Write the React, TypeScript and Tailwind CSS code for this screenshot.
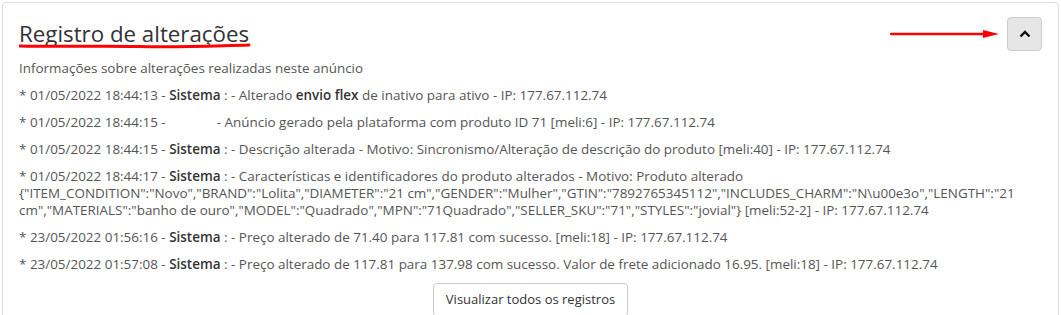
import React from "react";

const B = ({ children }: { children: React.ReactNode }) => <b className="font-semibold text-[#333]">{children}</b>;

const entries: React.ReactNode[] = [
  <>* 01/05/2022 18:44:13 - <B>Sistema</B> : - Alterado <B>envio flex</B> de inativo para ativo - IP: 177.67.112.74</>,
  <>* 01/05/2022 18:44:15 - <span className="inline-block w-[44px]"></span> - Anúncio gerado pela plataforma com produto ID 71 [meli:6] - IP: 177.67.112.74</>,
  <>* 01/05/2022 18:44:15 - <B>Sistema</B> : - Descrição alterada - Motivo: Sincronismo/Alteração de descrição do produto [meli:40] - IP: 177.67.112.74</>,
  <>* 01/05/2022 18:44:17 - <B>Sistema</B> : - Características e identificadores do produto alterados - Motivo: Produto alterado {'{"ITEM_CONDITION":"Novo","BRAND":"Lolita","DIAMETER":"21 cm","GENDER":"Mulher","GTIN":"7892765345112","INCLUDES_CHARM":"N\\u00e3o","LENGTH":"21 cm","MATERIALS":"banho de ouro","MODEL":"Quadrado","MPN":"71Quadrado","SELLER_SKU":"71","STYLES":"jovial"}'} [meli:52-2] - IP: 177.67.112.74</>,
  <>* 23/05/2022 01:56:16 - <B>Sistema</B> : - Preço alterado de 71.40 para 117.81 com sucesso. [meli:18] - IP: 177.67.112.74</>,
  <>* 23/05/2022 01:57:08 - <B>Sistema</B> : - Preço alterado de 117.81 para 137.98 com sucesso. Valor de frete adicionado 16.95. [meli:18] - IP: 177.67.112.74</>,
];

export default function App() {
  return (
    <div className="bg-white w-[1061px] h-[315px] overflow-hidden pt-[2px] pl-[2px] pr-[2px]" style={{ fontFamily: '"Open Sans", sans-serif' }}>
      <div className="relative border border-[#ddd] rounded-[4px] bg-white px-4 pt-[14px] pb-4 h-[330px]">
        <div className="flex items-center justify-between">
          <h3 className="relative text-[22.3px] leading-[34px] text-[#333] font-normal">
            Registro de alterações
            <svg className="absolute left-0 top-[25px]" width="232" height="8" viewBox="0 0 232 8">
              <path d="M1 4 C40 5, 80 3.5, 120 4.5 S190 4, 230 3" stroke="#f00" strokeWidth="3" fill="none" strokeLinecap="round" />
            </svg>
          </h3>
          <div className="flex items-center">
            <svg width="110" height="12" viewBox="0 0 110 12" className="mr-[7px]">
              <line x1="1" y1="6" x2="96" y2="6" stroke="#f00" strokeWidth="2.4" strokeLinecap="round" />
              <polygon points="93,2 109,6 93,10" fill="#f00" />
            </svg>
            <button className="w-[35px] h-[34px] rounded-[4px] bg-[#e6e6e6] border border-[#ccc] flex items-center justify-center">
              <svg width="12" height="8" viewBox="0 0 12 8">
                <path d="M1.5 6.5 L6 2 L10.5 6.5" stroke="#111" strokeWidth="2.4" fill="none" />
              </svg>
            </button>
          </div>
        </div>
        <p className="mt-[9px] text-[13.45px] leading-[17px] text-[#555]">Informações sobre alterações realizadas neste anúncio</p>
        <div className="mt-[10px] flex flex-col gap-[10px] pr-[4px]">
          {entries.map((e, i) => (
            <p key={i} className="text-[13.45px] leading-[17px] text-[#555]">{e}</p>
          ))}
        </div>
        <div className="flex justify-center mt-[10px]">
          <button className="border border-[#ccc] rounded-[4px] bg-white px-3 h-[34px] text-[13px] text-[#333]">Visualizar todos os registros</button>
        </div>
      </div>
    </div>
  );
}
